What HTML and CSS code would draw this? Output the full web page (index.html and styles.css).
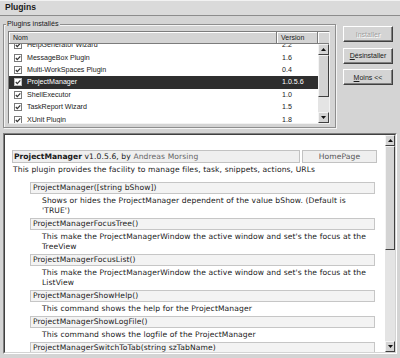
FILE: index.html
```html
<!DOCTYPE html>
<html>
<head>
<meta charset="utf-8">
<link rel="stylesheet" href="styles.css">
</head>
<body>
<div class="titlebar">Plugins</div>
<div class="top">
  <fieldset class="group">
    <legend>Plugins installés</legend>
    <div class="list">
      <div class="list-head">
        <div class="hcell hc-nom">Nom</div>
        <div class="hcell hc-ver">Version</div>
        <div class="hcell hc-fill"></div>
      </div>
      <div class="list-body">
        <div class="rows">
          <div class="rows-inner">
            <div class="row"><div class="name"><svg class="chk" viewBox="0 0 8 8"><rect x="0.5" y="0.5" width="7" height="7" fill="#fff" stroke="#7a7a7a"/><path d="M1.8 4 L3.3 5.6 L6.3 2.3" fill="none" stroke="#333" stroke-width="1.2"/></svg><span>HelpGenerator Wizard</span></div><div class="ver">2.2</div></div>
            <div class="row"><div class="name"><svg class="chk" viewBox="0 0 8 8"><rect x="0.5" y="0.5" width="7" height="7" fill="#fff" stroke="#7a7a7a"/><path d="M1.8 4 L3.3 5.6 L6.3 2.3" fill="none" stroke="#333" stroke-width="1.2"/></svg><span>MessageBox Plugin</span></div><div class="ver">1.6</div></div>
            <div class="row"><div class="name"><svg class="chk" viewBox="0 0 8 8"><rect x="0.5" y="0.5" width="7" height="7" fill="#fff" stroke="#7a7a7a"/><path d="M1.8 4 L3.3 5.6 L6.3 2.3" fill="none" stroke="#333" stroke-width="1.2"/></svg><span>Multi-WorkSpaces Plugin</span></div><div class="ver">0.4</div></div>
            <div class="row sel"><div class="name"><svg class="chk" viewBox="0 0 8 8"><rect x="0.5" y="0.5" width="7" height="7" fill="#fff" stroke="#bbb"/><path d="M1.8 4 L3.3 5.6 L6.3 2.3" fill="none" stroke="#333" stroke-width="1.2"/></svg><span>ProjectManager</span></div><div class="ver">1.0.5.6</div></div>
            <div class="row"><div class="name"><svg class="chk" viewBox="0 0 8 8"><rect x="0.5" y="0.5" width="7" height="7" fill="#fff" stroke="#7a7a7a"/><path d="M1.8 4 L3.3 5.6 L6.3 2.3" fill="none" stroke="#333" stroke-width="1.2"/></svg><span>ShellExecutor</span></div><div class="ver">1.0</div></div>
            <div class="row"><div class="name"><svg class="chk" viewBox="0 0 8 8"><rect x="0.5" y="0.5" width="7" height="7" fill="#fff" stroke="#7a7a7a"/><path d="M1.8 4 L3.3 5.6 L6.3 2.3" fill="none" stroke="#333" stroke-width="1.2"/></svg><span>TaskReport Wizard</span></div><div class="ver">1.5</div></div>
            <div class="row"><div class="name"><svg class="chk" viewBox="0 0 8 8"><rect x="0.5" y="0.5" width="7" height="7" fill="#fff" stroke="#7a7a7a"/><path d="M1.8 4 L3.3 5.6 L6.3 2.3" fill="none" stroke="#333" stroke-width="1.2"/></svg><span>XUnit Plugin</span></div><div class="ver">1.8</div></div>
          </div>
        </div>
        <div class="vscroll">
          <div class="sb-btn"><svg width="5" height="3" viewBox="0 0 5 3"><path d="M0 3 L2.5 0 L5 3Z" fill="#111"/></svg></div>
          <div class="sb-thumb thumb-list"></div>
          <div class="sb-track"></div>
          <div class="sb-btn"><svg width="5" height="3" viewBox="0 0 5 3"><path d="M0 0 L2.5 3 L5 0Z" fill="#111"/></svg></div>
        </div>
      </div>
    </div>
  </fieldset>
  <div class="buttons">
    <button class="btn disabled">Installer</button>
    <button class="btn"><span><u>D</u>ésinstaller</span></button>
    <button class="btn"><span><u>M</u>oins &lt;&lt;</span></button>
  </div>
</div>
<div class="panel">
  <div class="panel-in">
    <div class="doc">
      <div class="head">
        <div class="head-main"><b>ProjectManager</b> v1.0.5.6, by <span class="author">Andreas Morsing</span></div>
        <div class="head-home">HomePage</div>
      </div>
      <div class="intro">This plugin provides the facility to manage files, task, snippets, actions, URLs</div>
      <div class="fn">ProjectManager([string bShow])</div>
      <div class="desc">Shows or hides the ProjectManager dependent of the value bShow. (Default is<br>'TRUE')</div>
      <div class="fn">ProjectManagerFocusTree()</div>
      <div class="desc">This make the ProjectManagerWindow the active window and set's the focus at the<br>TreeView</div>
      <div class="fn">ProjectManagerFocusList()</div>
      <div class="desc">This make the ProjectManagerWindow the active window and set's the focus at the<br>ListView</div>
      <div class="fn">ProjectManagerShowHelp()</div>
      <div class="desc">This command shows the help for the ProjectManager</div>
      <div class="fn">ProjectManagerShowLogFile()</div>
      <div class="desc">This command shows the logfile of the ProjectManager</div>
      <div class="fn">ProjectManagerSwitchToTab(string szTabName)</div>
    </div>
    <div class="vscroll vscroll-doc">
      <div class="sb-btn"><svg width="5" height="3" viewBox="0 0 5 3"><path d="M0 3 L2.5 0 L5 3Z" fill="#111"/></svg></div>
      <div class="sb-thumb thumb-doc"></div>
      <div class="sb-track"></div>
      <div class="sb-btn"><svg width="5" height="3" viewBox="0 0 5 3"><path d="M0 0 L2.5 3 L5 0Z" fill="#111"/></svg></div>
    </div>
  </div>
</div>
</body>
</html>
```
FILE: styles.css
```css
* { box-sizing: border-box; }
html, body { margin: 0; padding: 0; }
body {
  width: 400px;
  height: 358px;
  overflow: hidden;
  background: #d4d4d4;
  font-family: "Liberation Sans", Arial, sans-serif;
  color: #1a1a1a;
  display: flex;
  flex-direction: column;
}
.titlebar {
  flex: 0 0 16px;
  background: #dadada;
  border-bottom: 1px solid #8c8c8c;
  box-shadow: inset 0 1px 0 #f2f2f2;
  font-weight: bold;
  font-size: 8.6px;
  line-height: 15px;
  padding-left: 5px;
}
.top {
  display: flex;
  gap: 7px;
  padding: 4px 7px 0 3px;
}
.group {
  flex: 0 0 333px;
  min-width: 0;
  margin: 0;
  padding: 3px 5px 3px 4px;
  border: 1px solid #8e8e8e;
  box-shadow: inset 1px 1px 0 #f4f4f4, 1px 1px 0 #f4f4f4;
}
.group legend {
  font-size: 7.2px;
  line-height: 8px;
  padding: 0 1px;
  margin-left: -2px;
  background: #d4d4d4;
}
.list {
  height: 93px;
  border: 1px solid;
  border-color: #7c7c7c #f2f2f2 #f2f2f2 #7c7c7c;
  display: flex;
  flex-direction: column;
  background: #fff;
}
.list-head {
  display: flex;
  flex: 0 0 12px;
  background: #d4d4d4;
  font-size: 7px;
  line-height: 11px;
}
.hcell {
  border-right: 1px solid #7c7c7c;
  border-bottom: 1px solid #7c7c7c;
  box-shadow: inset 1px 1px 0 #fff;
  padding-left: 4px;
}
.hc-nom { width: 268px; }
.hc-ver { width: 41px; }
.hc-fill { flex: 1; border-right: none; }
.list-body {
  flex: 1;
  display: flex;
  min-height: 0;
}
.rows { flex: 1; overflow: hidden; }
.rows-inner { margin-top: -5px; }
.row {
  display: grid;
  grid-template-columns: 268px 1fr;
  height: 12.4px;
  align-items: center;
  font-size: 7.1px;
}
.row .name {
  display: flex;
  align-items: center;
  gap: 5px;
  padding-left: 5px;
}
.row .ver { padding-left: 5px; }
.row.sel { background: #2e2e2e; color: #fff; }
.chk { width: 8px; height: 8px; display: block; }
.vscroll {
  flex: 0 0 11px;
  width: 11px;
  display: flex;
  flex-direction: column;
  background: #e4e4e4;
}
.sb-btn {
  flex: 0 0 11px;
  background: #d4d4d4;
  border: 1px solid;
  border-color: #f4f4f4 #404040 #404040 #f4f4f4;
  display: flex;
  align-items: center;
  justify-content: center;
}
.sb-thumb {
  background: #d4d4d4;
  border: 1px solid;
  border-color: #f4f4f4 #404040 #404040 #f4f4f4;
}
.thumb-list { flex: 0 0 42px; }
.thumb-doc { flex: 0 0 104px; }
.sb-track { flex: 1; }
.buttons {
  flex: 0 0 50px;
  display: flex;
  flex-direction: column;
  gap: 5.5px;
  padding-top: 6px;
}
.btn {
  height: 16px;
  margin: 0;
  padding: 0;
  border: 1px solid;
  border-color: #fff #404040 #404040 #fff;
  box-shadow: inset -1px -1px 0 #808080;
  background: #d4d4d4;
  font-family: "Liberation Sans", Arial, sans-serif;
  font-size: 7px;
  color: #1a1a1a;
  display: flex;
  align-items: center;
  justify-content: center;
}
.btn.disabled { color: #a0a0a0; text-shadow: 1px 1px 0 #fff; }
.panel {
  margin: 5px 3px 4px 3px;
  flex: 1;
  min-height: 0;
  border: 1px solid;
  border-color: #808080 #fff #fff #808080;
  display: flex;
}
.panel-in {
  flex: 1;
  min-width: 0;
  display: flex;
  border: 1px solid;
  border-color: #404040 #d4d4d4 #d4d4d4 #404040;
  background: #fff;
}
.vscroll-doc { flex: 0 0 10px; width: 10px; }
.doc {
  flex: 1;
  min-width: 0;
  overflow: hidden;
  padding: 15px 8px 0 7px;
  font-family: "DejaVu Sans", Verdana, sans-serif;
  font-size: 7.6px;
  letter-spacing: 0.1px;
  color: #1a1a1a;
}
.doc b { letter-spacing: 0; }
.head { display: flex; gap: 2px; height: 13px; }
.head-main {
  flex: 1;
  border: 1px solid #c2c2c2;
  background: #efefef;
  line-height: 11px;
  padding-left: 1px;
  white-space: nowrap;
  overflow: hidden;
}
.head-home {
  width: 75px;
  border: 1px solid #c2c2c2;
  background: #efefef;
  line-height: 11px;
  text-align: center;
  color: #555;
}
.author { color: #666; }
.intro { margin: 2px 0 7px 1px; line-height: 10px; white-space: nowrap; }
.fn {
  margin: 0 2px 0 18px;
  border: 1px solid #c6c6c6;
  background: #f3f3f3;
  line-height: 10px;
  padding-left: 2px;
  white-space: nowrap;
  overflow: hidden;
}
.desc { padding: 2px 0 2px 30px; line-height: 10px; white-space: nowrap; }
```
